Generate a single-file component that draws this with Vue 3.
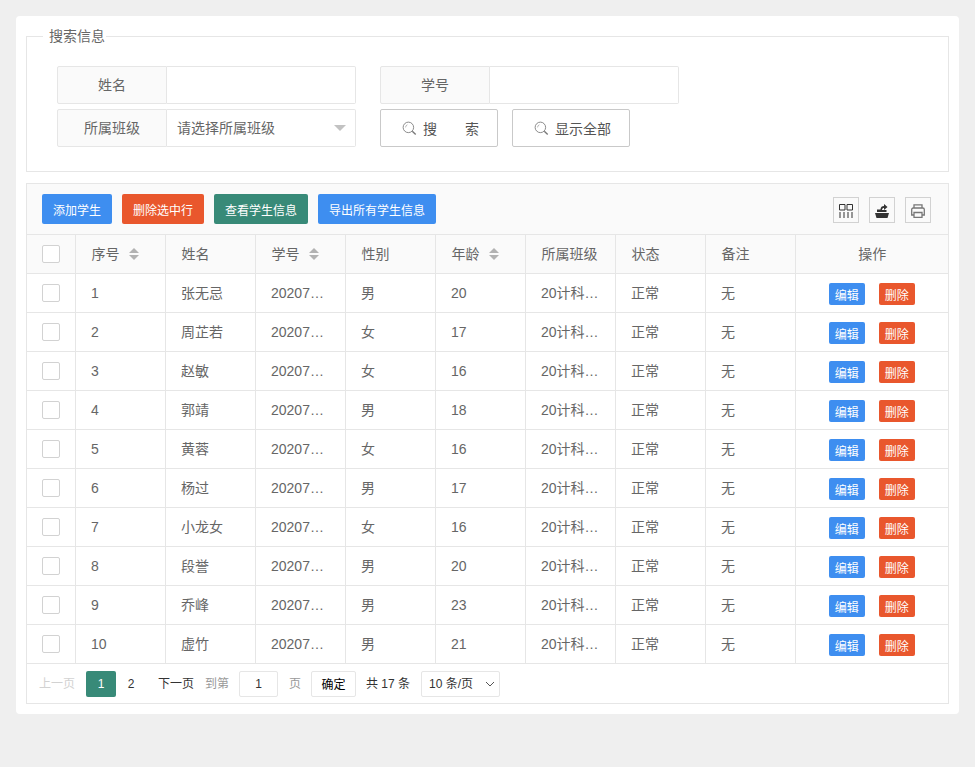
<script setup>
const students = [
  { id: 1, name: "张无忌", sex: "男", age: 20 },
  { id: 2, name: "周芷若", sex: "女", age: 17 },
  { id: 3, name: "赵敏", sex: "女", age: 16 },
  { id: 4, name: "郭靖", sex: "男", age: 18 },
  { id: 5, name: "黄蓉", sex: "女", age: 16 },
  { id: 6, name: "杨过", sex: "男", age: 17 },
  { id: 7, name: "小龙女", sex: "女", age: 16 },
  { id: 8, name: "段誉", sex: "男", age: 20 },
  { id: 9, name: "乔峰", sex: "男", age: 23 },
  { id: 10, name: "虚竹", sex: "男", age: 21 },
];

const columns = [
  { title: "序号", sort: true },
  { title: "姓名" },
  { title: "学号", sort: true },
  { title: "性别" },
  { title: "年龄", sort: true },
  { title: "所属班级" },
  { title: "状态" },
  { title: "备注" },
];
</script>

<template>
  <div class="page">
    <div class="card">
      <!-- SEARCH -->
      <fieldset class="search">
        <legend>搜索信息</legend>
        <div class="searchGrid">
          <div class="field">
            <label>姓名</label>
            <div class="fieldInput"></div>
          </div>
          <div class="field">
            <label>学号</label>
            <div class="fieldInput"></div>
          </div>
          <div class="field">
            <label>所属班级</label>
            <div class="fieldInput select">
              <span>请选择所属班级</span>
              <i class="selectArrow"></i>
            </div>
          </div>
          <div class="searchBtns">
            <button class="searchBtn">
              <svg class="searchIcon" viewBox="0 0 16 16">
                <circle cx="6.8" cy="6.8" r="5.6" />
                <path d="M3.800 6.800a3 3 0 0 1 2-2.800" stroke-opacity="0.6" />
                <path d="M11 11l3.600 3.400" stroke-width="1.500" />
              </svg>
              <span>搜</span><span class="gapChar">索</span>
            </button>
            <button class="searchBtn">
              <svg class="searchIcon" viewBox="0 0 16 16">
                <circle cx="6.8" cy="6.8" r="5.6" />
                <path d="M3.800 6.800a3 3 0 0 1 2-2.800" stroke-opacity="0.6" />
                <path d="M11 11l3.600 3.400" stroke-width="1.500" />
              </svg>
              <span>显示全部</span>
            </button>
          </div>
        </div>
      </fieldset>

      <!-- TABLE -->
      <div class="tableBox">
        <div class="toolbar">
          <div class="actions">
            <button class="btn blue">添加学生</button>
            <button class="btn red">删除选中行</button>
            <button class="btn green">查看学生信息</button>
            <button class="btn blue">导出所有学生信息</button>
          </div>
          <div class="tools">
            <div class="tool">
              <svg viewBox="0 0 14 14" class="toolIcon">
                <path d="M.5.500h5.500v5.500h-5.500zM8 .500h5.500v5.500h-5.500zM1 8v6M5 8v6M9 8v6M13 8v6" fill="none" stroke="#333" stroke-width="1" />
              </svg>
            </div>
            <div class="tool">
              <svg viewBox="0 0 14 14" class="toolIcon">
                <path d="M0 9h14l-1.500 5h-11z" fill="#333" />
                <path d="M2 8v-2.500h3.500c0-2.500 1.500-3.500 3.500-3.500v-2l3.500 3-3.500 3v-2c-1 0-2 .5-2 2h4.500v2z" fill="#333" />
              </svg>
            </div>
            <div class="tool">
              <svg viewBox="0 0 14 14" class="toolIcon">
                <path d="M3 4v-3.200h8v3.200M3 11h-2.300v-5.500a1.500 1.500 0 0 1 1.500-1.500h9.600a1.500 1.500 0 0 1 1.500 1.500v5.500h-2.300M3 8.500h8v4.800h-8z" fill="none" stroke="#777" stroke-width="1.300" />
              </svg>
            </div>
          </div>
        </div>

        <table class="dataTable">
          <colgroup>
            <col class="colCheck" />
            <col v-for="c in columns" :key="c.title" class="colData" />
            <col />
          </colgroup>
          <thead>
            <tr>
              <th class="checkCell"><i class="check"></i></th>
              <th v-for="c in columns" :key="c.title">
                <div class="thInner">
                  <span>{{ c.title }}</span>
                  <span v-if="c.sort" class="sort"><i class="up"></i><i class="down"></i></span>
                </div>
              </th>
              <th class="center">操作</th>
            </tr>
          </thead>
          <tbody>
            <tr v-for="s in students" :key="s.id">
              <td class="checkCell"><i class="check"></i></td>
              <td>{{ s.id }}</td>
              <td>{{ s.name }}</td>
              <td>20207…</td>
              <td>{{ s.sex }}</td>
              <td>{{ s.age }}</td>
              <td>20计科…</td>
              <td>正常</td>
              <td>无</td>
              <td class="center">
                <div class="rowBtns">
                  <button class="mini blue">编辑</button>
                  <button class="mini red">删除</button>
                </div>
              </td>
            </tr>
          </tbody>
        </table>

        <!-- PAGER -->
        <div class="pager">
          <span class="prev">上一页</span>
          <span class="pageNo active">1</span>
          <span class="pageNo">2</span>
          <span class="next">下一页</span>
          <span class="skip">到第</span>
          <span class="skipInput">1</span>
          <span class="skip unit">页</span>
          <span class="confirm">确定</span>
          <span class="total">共 17 条</span>
          <span class="limit">
            <span>10 条/页</span>
            <svg viewBox="0 0 10 6" class="limitArrow"><path d="M1 1l4 4 4-4" /></svg>
          </span>
        </div>
      </div>
    </div>
  </div>
</template>

<style>
html,
body {
  margin: 0;
  background: #efefef;
}
</style>

<style scoped>
.page {
  width: 975px;
  height: 767px;
  box-sizing: border-box;
  padding: 16px 16px 0;
  font-family: "Liberation Sans", "Noto Sans CJK SC", sans-serif;
  font-size: 14px;
  line-height: 20px;
  color: #666;
}
.card {
  background: #fff;
  border-radius: 4px;
  padding: 10px;
}
button {
  font-family: inherit;
  cursor: pointer;
}

/* ---------- search ---------- */
.search {
  margin: 0 0 11px;
  padding: 20px 30px 0;
  height: 146px;
  box-sizing: border-box;
  border: 1px solid #e6e6e6;
  min-width: 0;
}
.search legend {
  margin-left: -14px;
  padding: 0 1px 0 6px;
  font-size: 14px;
  line-height: 20px;
}
.searchGrid {
  display: grid;
  grid-template-columns: 299px 299px;
  grid-template-rows: 38px 38px;
  gap: 5px 24px;
}
.field {
  display: flex;
  width: 299px;
}
.field label {
  width: 110px;
  box-sizing: border-box;
  background: #fafafa;
  border: 1px solid #e6e6e6;
  border-radius: 2px 0 0 2px;
  text-align: center;
  line-height: 36px;
}
.fieldInput {
  width: 189px;
  box-sizing: border-box;
  border: 1px solid #e6e6e6;
  border-left: none;
  border-radius: 0 2px 2px 0;
}
.select {
  display: flex;
  align-items: center;
  justify-content: space-between;
  padding: 0 9px 0 10px;
}
.selectArrow {
  width: 0;
  height: 0;
  border: 6px solid transparent;
  border-top-color: #c2c2c2;
  border-bottom: none;
}
.searchBtns {
  display: flex;
  gap: 14px;
}
.searchBtn {
  width: 118px;
  height: 38px;
  box-sizing: border-box;
  background: #fff;
  border: 1px solid #c9c9c9;
  border-radius: 2px;
  color: #555;
  font-size: 14px;
  display: flex;
  align-items: center;
  padding: 0 0 0 21px;
}
.searchIcon {
  width: 15px;
  height: 15px;
  margin-right: 6px;
  fill: none;
  stroke: #777;
  stroke-width: 0.9;
}
.gapChar {
  margin-left: 28px;
}

/* ---------- table ---------- */
.tableBox {
  border: 1px solid #e6e6e6;
  box-sizing: border-box;
}
.toolbar {
  height: 51px;
  box-sizing: border-box;
  background: #fafafa;
  border-bottom: 1px solid #e6e6e6;
  padding: 10px 17px 0 15px;
  display: flex;
  justify-content: space-between;
}
.actions {
  display: flex;
  gap: 10px;
}
.btn {
  height: 30px;
  padding: 1px 11px 0;
  border: none;
  border-radius: 2px;
  color: #fff;
  font-size: 12px;
}
.blue {
  background: #3e8ef0;
}
.red {
  background: #e9572d;
}
.green {
  background: #388a78;
}
.tools {
  display: flex;
  gap: 10px;
  padding-top: 3px;
}
.tool {
  width: 26px;
  height: 26px;
  box-sizing: border-box;
  border: 1px solid #d2d2d2;
  display: flex;
  align-items: center;
  justify-content: center;
}
.toolIcon {
  width: 14px;
  height: 14px;
  margin-top: 2px;
}
.dataTable {
  width: 100%;
  table-layout: fixed;
  border-collapse: collapse;
}
.colCheck {
  width: 48px;
}
.colData {
  width: 90px;
}
.dataTable th,
.dataTable td {
  height: 39px;
  padding: 0 15px 0 15.5px;
  box-sizing: border-box;
  border-right: 1px solid #e6e6e6;
  border-bottom: 1px solid #e6e6e6;
  text-align: left;
  font-weight: 400;
  white-space: nowrap;
}
.dataTable th:last-child,
.dataTable td:last-child {
  border-right: none;
}
.dataTable th {
  background: #fafafa;
  height: 38px;
  padding-left: 16px;
}
.dataTable .center {
  text-align: center;
}
.dataTable td.center {
  padding: 2px 15px 0;
}
.dataTable .checkCell {
  padding: 0 0 0 15px;
}
.check {
  display: block;
  width: 18px;
  height: 18px;
  box-sizing: border-box;
  background: #fff;
  border: 1px solid #d2d2d2;
  border-radius: 2px;
}
.thInner {
  display: flex;
  align-items: center;
}
.sort {
  display: flex;
  flex-direction: column;
  gap: 2px;
  margin-left: 9px;
}
.up,
.down {
  width: 0;
  height: 0;
  border-left: 5.5px solid transparent;
  border-right: 5.5px solid transparent;
}
.up {
  border-bottom: 5px solid #b2b2b2;
}
.down {
  border-top: 5px solid #b2b2b2;
}
.rowBtns {
  display: flex;
  justify-content: center;
  gap: 14px;
}
.mini {
  width: 36px;
  height: 22px;
  padding: 1px 0 0;
  border: none;
  border-radius: 2px;
  color: #fff;
  font-size: 12px;
}

/* ---------- pager ---------- */
.pager {
  height: 39px;
  box-sizing: border-box;
  padding: 7px 0 0 12px;
  display: flex;
  align-items: flex-start;
  font-size: 12px;
  color: #333;
  line-height: 26px;
  white-space: nowrap;
}
.prev {
  color: #d2d2d2;
  width: 36px;
  margin-right: 11px;
}
.pageNo {
  width: 30px;
  height: 26px;
  text-align: center;
}
.pageNo.active {
  background: #388a78;
  border-radius: 2px;
  color: #fff;
}
.next {
  margin-left: 12px;
  width: 36px;
}
.skip {
  color: #999;
  margin-left: 11px;
  width: 24px;
}
.skipInput {
  width: 39px;
  height: 26px;
  box-sizing: border-box;
  margin-left: 10px;
  border: 1px solid #e6e6e6;
  border-radius: 2px;
  text-align: center;
  line-height: 24px;
  color: #333;
}
.skip.unit {
  width: 12px;
}
.confirm {
  width: 45px;
  height: 26px;
  box-sizing: border-box;
  margin-left: 10px;
  border: 1px solid #e6e6e6;
  border-radius: 2px;
  text-align: center;
  line-height: 26px;
  color: #000;
}
.total {
  margin-left: 10px;
  width: 45px;
}
.limit {
  width: 79px;
  height: 26px;
  box-sizing: border-box;
  margin-left: 10px;
  border: 1px solid #e6e6e6;
  border-radius: 2px;
  display: flex;
  align-items: center;
  justify-content: space-between;
  padding: 0 4px 0 7px;
  line-height: 24px;
}
.limitArrow {
  width: 10px;
  height: 6px;
  fill: none;
  stroke: #555;
  stroke-width: 1;
}
</style>
